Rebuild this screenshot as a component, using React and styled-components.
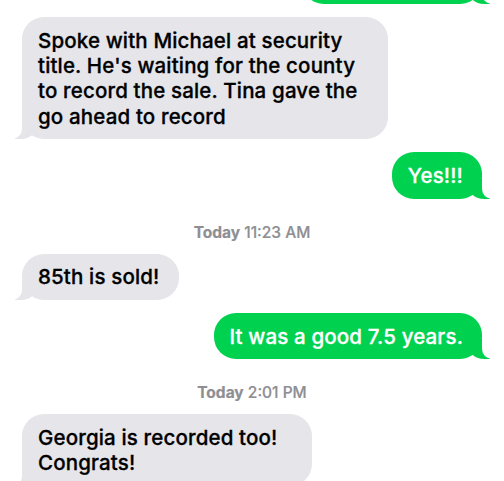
import React from 'react'
import styled, { createGlobalStyle, css } from 'styled-components'

const GlobalStyle = createGlobalStyle`
  html, body {
    margin: 0;
    padding: 0;
    background: #ffffff;
  }
  body {
    font-family: Inter, "Noto Sans", "Liberation Sans", sans-serif;
    -webkit-font-smoothing: antialiased;
  }
`

const StyledThread = styled.div`
  width: 504px;
  height: 481px;
  overflow: hidden;
  box-sizing: border-box;
  padding: 0 22px;
  display: flex;
  flex-direction: column;
  gap: 13px;
`

const StyledBubble = styled.div`
  position: relative;
  box-sizing: border-box;
  width: fit-content;
  max-width: 366px;
  padding: 10.5px 19px 10.5px 16px;
  border-radius: 22px;
  font-size: 20.5px;
  line-height: 25.3px;
  font-weight: 500;
  letter-spacing: 0.15px;
  -webkit-text-stroke: 0.3px currentColor;
  flex-shrink: 0;

  &::before,
  &::after {
    content: "";
    position: absolute;
    bottom: 0;
    height: 20px;
  }

  ${props => props.mine ? css`
    align-self: flex-end;
    background: #00d24f;
    color: #ffffff;
    &::before {
      right: -8px;
      width: 22px;
      background: #00d24f;
      border-bottom-left-radius: 16px 14px;
    }
    &::after {
      right: -26px;
      width: 26px;
      background: #ffffff;
      border-bottom-left-radius: 10px;
    }
  ` : css`
    align-self: flex-start;
    background: #e5e5ea;
    color: #000000;
    &::before {
      left: -7px;
      width: 22px;
      background: #e5e5ea;
      border-bottom-right-radius: 16px 14px;
    }
    &::after {
      left: -26px;
      width: 26px;
      background: #ffffff;
      border-bottom-right-radius: 10px;
    }
  `}

  ${props => props.cut && css`
    margin-top: -42px;
    width: 180px;
  `}
`

const StyledStamp = styled.div`
  text-align: center;
  font-size: 15.5px;
  line-height: 18px;
  font-weight: 500;
  color: #8e8e93;
  margin: 12px 0 -1px;
  flex-shrink: 0;
  -webkit-text-stroke: 0.2px currentColor;

  b {
    font-weight: 700;
  }
`

const messages = [
  { mine: true, cut: true, text: '\u00a0' },
  { text: "Spoke with Michael at security title. He's waiting for the county to record the sale. Tina gave the go ahead to record" },
  { mine: true, text: 'Yes!!!' },
  { stamp: ['Today', '11:23 AM'] },
  { text: '85th is sold!' },
  { mine: true, text: 'It was a good 7.5 years.' },
  { stamp: ['Today', '2:01 PM'] },
  { text: 'Georgia is recorded too! Congrats!', width: 290 },
]

const App = () => {
  return (
    <>
      <GlobalStyle/>
      <StyledThread>
        {messages.map((m, i) => m.stamp
          ? <StyledStamp key={i}><b>{m.stamp[0]}</b> {m.stamp[1]}</StyledStamp>
          : <StyledBubble key={i} mine={m.mine} cut={m.cut}
                          style={m.width ? { maxWidth: m.width } : undefined}>{m.text}</StyledBubble>
        )}
      </StyledThread>
    </>
  )
}

export default App
